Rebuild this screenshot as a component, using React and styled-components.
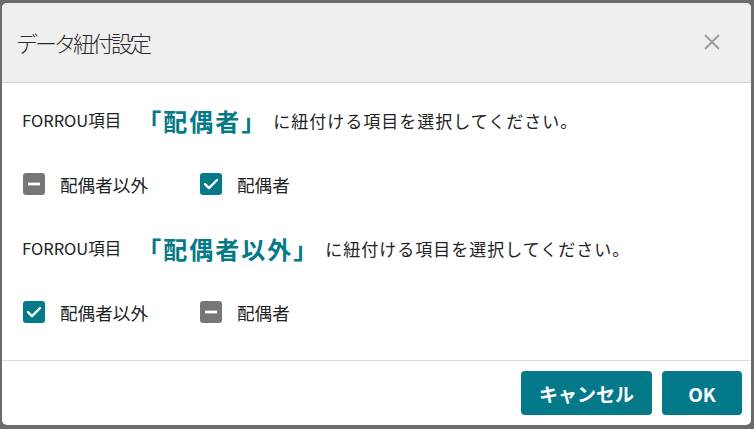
import React, { useState } from 'react';
import styled, { createGlobalStyle } from 'styled-components';

const $teal = '#04798a';
const $gray = '#767676';
const $text = '#222';

const GlobalStyle = createGlobalStyle`
  html, body {
    margin: 0;
    padding: 0;
    background: #6c6c6c;
  }
  body {
    font-family: "Noto Sans CJK JP", "Noto Sans", sans-serif;
    color: ${$text};
  }
`;

const Overlay = styled.div`
  padding: 3px 3px 4px 2px;
  height: 429px;
  box-sizing: border-box;
`;

const Dialog = styled.div`
  background: #fff;
  border-radius: 5px;
  overflow: hidden;
  height: 422px;
  display: flex;
  flex-direction: column;
`;

const Header = styled.div`
  height: 80px;
  box-sizing: border-box;
  background: #efefef;
  border-bottom: 1px solid #d2d2d2;
  display: flex;
  align-items: center;
  justify-content: space-between;
  padding: 0 29px 2px 14px;
`;

const Title = styled.h1`
  margin: 0;
  font-size: 22px;
  font-weight: 300;
  letter-spacing: -3px;
  color: #2a2a2a;
`;

const CloseBtn = styled.button`
  border: 0;
  background: none;
  padding: 0;
  width: 20px;
  height: 20px;
  display: flex;
  align-items: center;
  justify-content: center;
  cursor: pointer;
`;

const Body = styled.div`
  flex: 1;
  padding: 5px 20px 0;
  border-bottom: 1px solid #dcdcdc;
`;

const Question = styled.div`
  height: 64px;
  display: flex;
  align-items: center;
`;

const Label = styled.span`
  font-size: 16.5px;
`;

const Target = styled.span`
  color: ${$teal};
  font-size: 24px;
  font-weight: 700;
  margin: 0 6px 0 16px;
  letter-spacing: 2px;
`;

const Hint = styled.span`
  font-size: 17px;
  letter-spacing: 1px;
`;

const Options = styled.div`
  height: 64px;
  display: flex;
  align-items: center;
  gap: 52px;
  padding-left: 1px;
`;

const Option = styled.label`
  display: flex;
  align-items: center;
  gap: 15px;
  font-size: 17.6px;
  cursor: pointer;
`;

const Box = styled.span`
  width: 22px;
  height: 22px;
  border-radius: 3px;
  background: ${({ $checked }) => ($checked ? $teal : $gray)};
  display: flex;
  align-items: center;
  justify-content: center;
`;

const Footer = styled.div`
  height: 64px;
  display: flex;
  align-items: center;
  justify-content: flex-end;
  gap: 10px;
  padding: 0 9px 0 0;
`;

const Button = styled.button`
  height: 44px;
  min-width: ${({ $wide }) => ($wide ? '131px' : '80px')};
  border: 0;
  border-radius: 4px;
  background: ${$teal};
  color: #fff;
  font-family: "Noto Sans CJK JP", "Noto Sans", sans-serif;
  font-size: 19px;
  font-weight: 700;
  cursor: pointer;
`;

function CheckMark() {
  return (
    <svg width="18" height="18" viewBox="0 0 18 18">
      <path d="M3 9.2 L7 13.2 L15 5" fill="none" stroke="#fff" strokeWidth="2.4" strokeLinecap="round" strokeLinejoin="round" />
    </svg>
  );
}

function Dash() {
  return (
    <svg width="18" height="18" viewBox="0 0 18 18">
      <rect x="3" y="7.6" width="12" height="2.8" fill="#fff" />
    </svg>
  );
}

function Checkbox({ checked, children, onToggle }) {
  return (
    <Option onClick={onToggle}>
      <Box $checked={checked}>{checked ? <CheckMark /> : <Dash />}</Box>
      <span>{children}</span>
    </Option>
  );
}

const groups = [
  { target: '配偶者', selected: '配偶者' },
  { target: '配偶者以外', selected: '配偶者以外' },
];

const choices = ['配偶者以外', '配偶者'];

export default function App() {
  const [selection, setSelection] = useState(groups.map(g => g.selected));

  return (
    <>
      <GlobalStyle />
      <Overlay>
        <Dialog>
          <Header>
            <Title>データ紐付設定</Title>
            <CloseBtn aria-label="close">
              <svg width="16" height="16" viewBox="0 0 16 16">
                <path d="M1 1 L15 15 M15 1 L1 15" stroke="#9a9a9a" strokeWidth="1.8" />
              </svg>
            </CloseBtn>
          </Header>
          <Body>
            {groups.map(({ target }, idx) => (
              <React.Fragment key={`group_${idx + 1}`}>
                <Question>
                  <Label>FORROU項目</Label>
                  <Target>「{target}」</Target>
                  <Hint>に紐付ける項目を選択してください。</Hint>
                </Question>
                <Options>
                  {choices.map(choice => (
                    <Checkbox
                      key={choice}
                      checked={selection[idx] === choice}
                      onToggle={() => setSelection(prev => prev.map((v, i) => (i === idx ? choice : v)))}
                    >
                      {choice}
                    </Checkbox>
                  ))}
                </Options>
              </React.Fragment>
            ))}
          </Body>
          <Footer>
            <Button $wide>キャンセル</Button>
            <Button>OK</Button>
          </Footer>
        </Dialog>
      </Overlay>
    </>
  );
}
